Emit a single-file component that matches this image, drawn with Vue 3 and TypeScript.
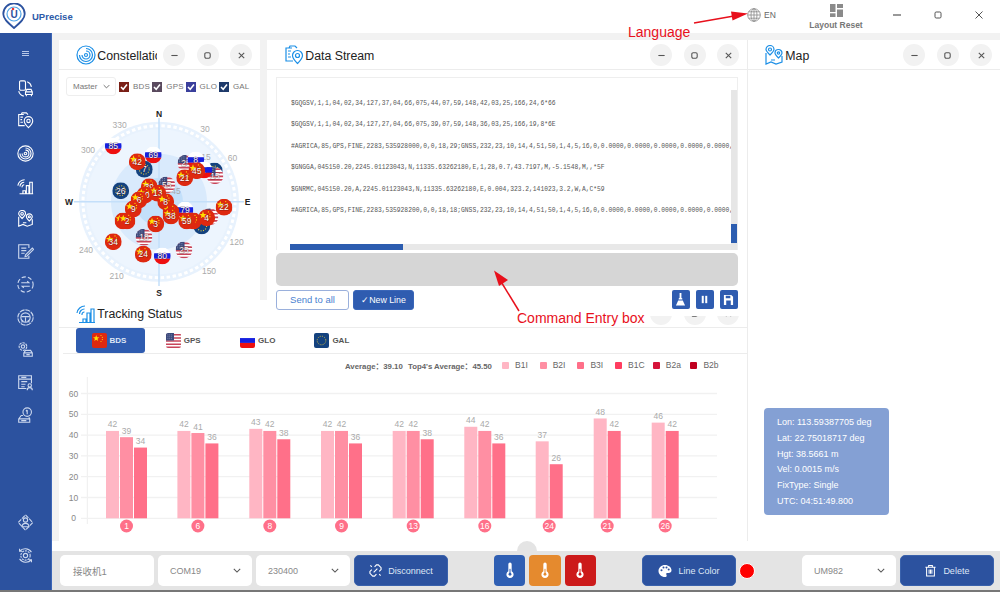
<script setup lang="ts">
type Gnss = 'bds' | 'gps' | 'glo' | 'gal'

const sideTop = ['phonecar', 'stream', 'target', 'signal', 'map', 'note', 'exchange', 'wheel', 'gear', 'doc', 'disk']
const sideBottom = ['person', 'rotate']

const streamLines = [
  '$GQGSV,1,1,04,02,34,127,37,04,66,075,44,07,59,148,42,03,25,166,24,6*66',
  '$GQGSV,1,1,04,02,34,127,27,04,66,075,39,07,59,148,36,03,25,166,19,8*6E',
  '#AGRICA,85,GPS,FINE,2283,535928000,0,0,18,29;GNSS,232,23,10,14,4,51,50,1,4,5,16,0,0.0000,0.0000,0.0000,0.0000,0.0000,0.0000,0.0000',
  '$GNGGA,045150.20,2245.01123043,N,11335.63262180,E,1,28,0.7,43.7197,M,-5.1548,M,,*5F',
  '$GNRMC,045150.20,A,2245.01123043,N,11335.63262180,E,0.004,323.2,141023,3.2,W,A,C*59',
  '#AGRICA,85,GPS,FINE,2283,535928200,0,0,18,18;GNSS,232,23,10,14,4,51,50,1,4,5,16,0,0.0000,0.0000,0.0000,0.0000,0.0000,0.0000,0.0000'
]

const checks: { id: Gnss; label: string }[] = [
  { id: 'bds', label: 'BDS' },
  { id: 'gps', label: 'GPS' },
  { id: 'glo', label: 'GLO' },
  { id: 'gal', label: 'GAL' }
]

const angles = [
  ['330', 119.7, 128], ['30', 205, 132], ['300', 88, 153], ['60', 232.5, 161],
  ['120', 236.7, 245], ['240', 86, 253], ['210', 116.7, 279], ['150', 209, 274],
  ['15', 206, 160], ['45', 176, 194]
] as const

const sats: { n: string; t: Gnss; x: number; y: number }[] = [
  { n: '85', t: 'glo', x: 113.3, y: 146 },
  { n: '69', t: 'glo', x: 153.3, y: 155 },
  { n: '7', t: 'gal', x: 144.3, y: 169.3 },
  { n: '42', t: 'bds', x: 137.3, y: 161.7 },
  { n: '25', t: 'gps', x: 186, y: 163.3 },
  { n: '8', t: 'glo', x: 195.7, y: 160 },
  { n: '', t: 'gal', x: 214.3, y: 171 },
  { n: '15', t: 'gps', x: 215, y: 175.7 },
  { n: '', t: 'glo', x: 204, y: 170 },
  { n: '45', t: 'bds', x: 196.7, y: 170.7 },
  { n: '21', t: 'bds', x: 184.7, y: 177.7 },
  { n: '26', t: 'gal', x: 120.7, y: 190.7 },
  { n: '55', t: 'gps', x: 166.7, y: 185 },
  { n: '39', t: 'bds', x: 149.3, y: 186.7 },
  { n: '10', t: 'bds', x: 145, y: 195 },
  { n: '13', t: 'bds', x: 157.7, y: 193.3 },
  { n: '6', t: 'bds', x: 139, y: 200 },
  { n: '8', t: 'bds', x: 165.7, y: 201.7 },
  { n: '9', t: 'bds', x: 133.3, y: 209 },
  { n: '', t: 'bds', x: 123, y: 221 },
  { n: '2', t: 'bds', x: 127, y: 221 },
  { n: '79', t: 'glo', x: 185, y: 210 },
  { n: '', t: 'bds', x: 171, y: 212 },
  { n: '38', t: 'bds', x: 171, y: 216 },
  { n: '', t: 'gal', x: 201.7, y: 226 },
  { n: '', t: 'gps', x: 210, y: 216.7 },
  { n: '', t: 'bds', x: 193.3, y: 221 },
  { n: '59', t: 'bds', x: 186.7, y: 221 },
  { n: '4', t: 'bds', x: 206.7, y: 217.7 },
  { n: '22', t: 'bds', x: 224, y: 207.3 },
  { n: '3', t: 'bds', x: 155.7, y: 224 },
  { n: '18', t: 'gps', x: 144, y: 237.3 },
  { n: '34', t: 'bds', x: 113.3, y: 241.7 },
  { n: '24', t: 'bds', x: 143.3, y: 254.3 },
  { n: '80', t: 'glo', x: 162.3, y: 256 },
  { n: '25', t: 'gps', x: 184, y: 250 }
]

const legend = [
  { label: 'B1I', color: '#ffb6c4' },
  { label: 'B2I', color: '#ff8fa3' },
  { label: 'B3I', color: '#ff6f89' },
  { label: 'B1C', color: '#ff3d60' },
  { label: 'B2a', color: '#d5133a' },
  { label: 'B2b', color: '#c00020' }
]

const barColors = ['#ffb6c4', '#ff8fa3', '#ff7089']
const ticks = [0, 10, 20, 30, 40, 50, 60]
const groups = [
  { id: 1, x: 106, v: [42, 39, 34] },
  { id: 6, x: 177.4, v: [42, 41, 36] },
  { id: 8, x: 249.3, v: [43, 42, 38] },
  { id: 9, x: 321, v: [42, 42, 36] },
  { id: 13, x: 392.7, v: [42, 42, 38] },
  { id: 16, x: 464.3, v: [44, 42, 36] },
  { id: 24, x: 535.7, v: [37, 26] },
  { id: 21, x: 593.7, v: [48, 42] },
  { id: 26, x: 651.7, v: [46, 42] }
]
const barY = (v: number) => 517.3 - v * 2.08

const mapInfo = [
  'Lon: 113.59387705 deg',
  'Lat: 22.75018717 deg',
  'Hgt: 38.5661 m',
  'Vel: 0.0015 m/s',
  'FixType: Single',
  'UTC: 04:51:49.800'
]
const thermos = ['#2f5fb3', '#e58a2e', '#cc1a1a']
</script>

<template>
  <div class="app">
    <svg class="defs" width="0" height="0" aria-hidden="true">
      <defs>
        <clipPath id="satClip"><circle cx="8.5" cy="8.5" r="8.5" /></clipPath>
        <symbol id="flag-bds" viewBox="0 0 16 16">
          <rect width="16" height="16" fill="#de2910" />
          <path d="M4.5 2l.9 2.4 2.5.1-2 1.6.7 2.4-2.1-1.4-2.1 1.4.7-2.4-2-1.6 2.5-.1z" fill="#ffde00" />
          <circle cx="9.6" cy="2.6" r=".6" fill="#ffde00" />
          <circle cx="11" cy="4.6" r=".6" fill="#ffde00" />
          <circle cx="11" cy="7" r=".6" fill="#ffde00" />
          <circle cx="9.6" cy="9" r=".6" fill="#ffde00" />
        </symbol>
        <symbol id="flag-gps" viewBox="0 0 16 16">
          <rect width="16" height="16" fill="#fff" />
          <path d="M0 1h16v1.6H0zM0 4.4h16V6H0zM0 7.8h16v1.6H0zM0 11.2h16v1.6H0zM0 14.4h16V16H0z" fill="#c8455a" />
          <rect width="8.5" height="8" fill="#3c4a7c" />
          <path d="M1.5 2h5M1.5 4h5M1.5 6h5" stroke="#9aa4c8" stroke-width=".7" stroke-dasharray="1 1" />
        </symbol>
        <symbol id="flag-glo" viewBox="0 0 16 16">
          <rect width="16" height="5.4" fill="#fff" />
          <rect y="5.4" width="16" height="5.2" fill="#1520e0" />
          <rect y="10.6" width="16" height="5.4" fill="#ee1010" />
        </symbol>
        <symbol id="flag-gal" viewBox="0 0 16 16">
          <rect width="16" height="16" fill="#14427f" />
          <circle cx="8" cy="8" r="4.6" fill="none" stroke="#e8c93a" stroke-width="1" stroke-dasharray="1 1.4" />
        </symbol>

        <symbol id="ic-phonecar" viewBox="0 0 20 20">
          <rect x="3" y="1" width="7" height="11" rx="1.5" />
          <path d="M12 2a8 8 0 0 1 5 6M2 13a8 8 0 0 0 6 6" />
          <path d="M10 17v-3l1.5-3h5l1.5 3v3zM10 14h8" />
          <path d="M11 17v2M17 17v2" />
        </symbol>
        <symbol id="ic-stream" viewBox="0 0 20 20">
          <path d="M8 3H2v13h7M4 6h3M4 9h2M4 12h3M5 3l1-2h5l2 2" />
          <path d="M13.5 18.5c-3-3-5-5-5-8a5 5 0 0 1 10 0c0 3-2 5-5 8z" />
          <circle cx="13.5" cy="10.5" r="2" />
        </symbol>
        <symbol id="ic-target" viewBox="0 0 20 20">
          <circle cx="10" cy="10" r="9" />
          <path d="M10 3.5a6.5 6.5 0 1 1-6.500 6.500" />
          <path d="M10 6a4 4 0 1 1-4 4" />
          <circle cx="10" cy="10" r="1.5" />
        </symbol>
        <symbol id="ic-signal" viewBox="0 0 20 20">
          <path d="M1 9a8 8 0 0 1 8-7M3.5 10a5 5 0 0 1 5-5M6 11a2.5 2.5 0 0 1 2.500-3" />
          <path d="M7 18v-3h3v3M11 18V9h3v9M15 18V5h3v13M3 18.500h16" />
        </symbol>
        <symbol id="ic-map" viewBox="0 0 20 20">
          <path d="M6 10C3.500 7.500 2 6 2 4.500a4 4 0 0 1 8 0C10 6 8.500 7.500 6 10z" />
          <circle cx="6" cy="4.500" r="1.500" />
          <path d="M14.500 13c-2-2-3.500-3.500-3.500-5a3.500 3.500 0 0 1 7 0c0 1.500-1.500 3-3.500 5z" />
          <circle cx="14.500" cy="8" r="1.200" />
          <path d="M2 8v11l5-2 5 2 6-2v-6M7 15h4" />
        </symbol>
        <symbol id="ic-note" viewBox="0 0 20 20">
          <path d="M14 6V2H2v16h12v-3M5 6h6M5 9h6M5 12h4" />
          <path d="M10 14l8-8 1.500 1.500-8 8-2 .5z" />
        </symbol>
        <symbol id="ic-exchange" viewBox="0 0 20 20">
          <circle cx="10" cy="10" r="9" stroke-dasharray="5 2.5" />
          <path d="M5 8h9l-2-2M15 12H6l2 2" />
        </symbol>
        <symbol id="ic-wheel" viewBox="0 0 20 20">
          <circle cx="10" cy="10" r="9" stroke-dasharray="6 1" />
          <circle cx="10" cy="10" r="5.5" />
          <path d="M5 9h10M10 10v5M7 13l-1.500 3M13 13l1.500 3" />
        </symbol>
        <symbol id="ic-gear" viewBox="0 0 20 20">
          <circle cx="7" cy="6.5" r="4.5" stroke-dasharray="3 1" />
          <circle cx="7" cy="6.5" r="2" />
          <path d="M8 18v-4l2-3h6l2 3v4zM8 14h10M11 16h4" />
        </symbol>
        <symbol id="ic-doc" viewBox="0 0 20 20">
          <path d="M11 17H2V2h15v9M2 6h15M5 4h6M5 9h7M5 12h5M5 15h4" />
          <circle cx="15" cy="13.5" r="2" />
          <path d="M12 19a3 3 0 0 1 6 0" />
        </symbol>
        <symbol id="ic-disk" viewBox="0 0 20 20">
          <path d="M7 10H5l-3 4v4h13v-4l-1-2M2 14h13M5 16h6" />
          <circle cx="12" cy="6" r="5" />
          <path d="M12 3.500v5M10.500 5l1.500-1.500" />
        </symbol>
        <symbol id="ic-person" viewBox="0 0 20 20">
          <path d="M10 1l8.500 9-8.500 9-8.500-9z" stroke-dasharray="5 1.2" />
          <circle cx="10" cy="7" r="2.5" />
          <path d="M6 15a4 4 0 0 1 8 0z" />
        </symbol>
        <symbol id="ic-rotate" viewBox="0 0 20 20">
          <path d="M3 5a9 9 0 0 1 14 1M17 15a9 9 0 0 1-14-1M3 2v3h3M17 18v-3h-3" />
          <circle cx="10" cy="10" r="5.5" stroke-dasharray="2.5 1" />
          <circle cx="10" cy="10" r="2.5" />
        </symbol>
      </defs>
    </svg>

    <header class="topbar">
      <svg class="logo" viewBox="0 0 24 26" width="24" height="26">
        <path d="M12 25C5 19 1.300 15.500 1.300 11a10.700 10.700 0 0 1 21.400 0C22.700 15.500 19 19 12 25z" fill="none" stroke="#2c529f" stroke-width="1.800" />
        <circle cx="12" cy="11" r="7" fill="none" stroke="#4fa3e6" stroke-width="1.200" />
        <text x="12" y="15" text-anchor="middle" class="logo-u">U</text>
        <circle cx="11" cy="6" r="1.300" fill="#e33" />
      </svg>
      <span class="brand">UPrecise</span>

      <div class="lang">
        <svg viewBox="0 0 14 14" width="14" height="14" fill="none" stroke="#888" stroke-width=".8">
          <circle cx="7" cy="7" r="6.300" />
          <ellipse cx="7" cy="7" rx="3" ry="6.300" />
          <path d="M7 .7v12.600M.7 7h12.600M1.600 3.800h10.800M1.600 10.200h10.800" />
        </svg>
        <span>EN</span>
      </div>
      <div class="layout-reset">
        <svg viewBox="0 0 13 13" width="13" height="13" fill="#8a8a8a">
          <rect width="5.5" height="8" />
          <rect x="7" width="6" height="4" />
          <rect y="9.3" width="5.5" height="3.700" />
          <rect x="7" y="5.5" width="6" height="7.500" />
        </svg>
        <span>Layout Reset</span>
      </div>
      <button class="win-btn">
        <svg viewBox="0 0 10 10" width="10" height="10"><path d="M1 5h8" stroke="#555" stroke-width="1.200" /></svg>
      </button>
      <button class="win-btn">
        <svg viewBox="0 0 10 10" width="10" height="10"><rect x="2" y="2" width="6" height="6" rx="1.200" fill="none" stroke="#555" stroke-width="1" /></svg>
      </button>
      <button class="win-btn">
        <svg viewBox="0 0 10 10" width="10" height="10"><path d="M1.500 1.500l7 7M8.500 1.500l-7 7" stroke="#555" stroke-width="1" /></svg>
      </button>
    </header>

    <div class="body">
      <nav class="side">
        <div class="menu-icon"><i /><i /><i /></div>
        <svg v-for="(name, i) in sideTop" :key="name" class="side-icon" :class="{ dim: i > 4 }" viewBox="0 0 20 20">
          <use :href="`#ic-${name}`" />
        </svg>
        <div class="side-spacer" />
        <svg v-for="name in sideBottom" :key="name" class="side-icon dim" viewBox="0 0 20 20">
          <use :href="`#ic-${name}`" />
        </svg>
      </nav>

      <div class="content">
        <div class="workspace">
          <div class="left">
            <div class="top-row">
              <section class="panel constellation">
                <div class="panel-head">
                  <svg class="panel-icon" viewBox="0 0 20 20"><use href="#ic-target" /></svg>
                  <span class="panel-title clip">Constellation</span>
                  <span class="round-btn"><svg viewBox="0 0 10 10"><path d="M1.500 5h7" /></svg></span>
                  <span class="round-btn"><svg viewBox="0 0 10 10"><rect x="2" y="2" width="6" height="6" rx="1.500" /></svg></span>
                  <span class="round-btn"><svg viewBox="0 0 10 10"><path d="M2 2l6 6M8 2l-6 6" /></svg></span>
                </div>
                <div class="filters">
                  <div class="master">
                    <span>Master</span>
                    <svg viewBox="0 0 10 6" width="7" height="5"><path d="M1 1l4 4 4-4" fill="none" stroke="#666" stroke-width="1.300" /></svg>
                  </div>
                  <label v-for="c in checks" :key="c.id" class="check">
                    <span class="check-box" :class="c.id">
                      <svg viewBox="0 0 10 10"><path d="M2 5l2.200 2.300L8 2.500" fill="none" stroke="#fff" stroke-width="1.500" /></svg>
                    </span>
                    {{ c.label }}
                  </label>
                </div>
                <svg class="polar" viewBox="59 100 201 200">
                  <circle cx="159" cy="201.700" r="80" fill="#e8f2fd" />
                  <circle cx="159" cy="201.700" r="76" fill="none" stroke="#fff" stroke-width="3" stroke-dasharray="3.500 2.500" />
                  <circle cx="159" cy="201.700" r="72.500" fill="#edf5fe" />
                  <circle cx="159" cy="201.700" r="48" fill="#d9eafc" />
                  <circle cx="159" cy="201.700" r="24" fill="#c3e0fa" />
                  <path d="M74 201.700h170M159 118v168" stroke="#c4dffa" stroke-width="1.500" />
                  <text x="159" y="117" class="compass">N</text>
                  <text x="159" y="296" class="compass">S</text>
                  <text x="69" y="205" class="compass">W</text>
                  <text x="247.500" y="205" class="compass">E</text>
                  <text v-for="a in angles" :key="a[0]" :x="a[1]" :y="a[2]" class="angle">{{ a[0] }}</text>
                  <g v-for="(s, i) in sats" :key="i" :transform="`translate(${s.x - 8.5} ${s.y - 8.5})`">
                    <use :href="`#flag-${s.t}`" width="17" height="17" clip-path="url(#satClip)" />
                    <text x="8.500" y="11.500" class="sat-num">{{ s.n }}</text>
                  </g>
                </svg>
              </section>

              <section class="panel stream">
                <div class="panel-head">
                  <svg class="panel-icon" viewBox="0 0 20 20"><use href="#ic-stream" /></svg>
                  <span class="panel-title">Data Stream</span>
                  <span class="round-btn"><svg viewBox="0 0 10 10"><path d="M1.500 5h7" /></svg></span>
                  <span class="round-btn"><svg viewBox="0 0 10 10"><rect x="2" y="2" width="6" height="6" rx="1.500" /></svg></span>
                  <span class="round-btn"><svg viewBox="0 0 10 10"><path d="M2 2l6 6M8 2l-6 6" /></svg></span>
                </div>
                <div class="stream-body">
                  <div class="log">
                    <p v-for="line in streamLines" :key="line">{{ line }}</p>
                    <div class="scroll-v"><i /></div>
                    <div class="scroll-h"><i /></div>
                  </div>
                  <div class="cmd-box" />
                  <div class="actions">
                    <button class="btn-outline">Send to all</button>
                    <button class="btn-solid">✓New Line</button>
                    <span class="actions-gap" />
                    <button class="btn-icon">
                      <svg viewBox="0 0 12 14" fill="#fff"><path d="M5 0h2v5l1 1v1H4V6l1-1zM3.500 8h5L11 13.500H1z" /></svg>
                    </button>
                    <button class="btn-icon">
                      <svg viewBox="0 0 12 14" fill="#fff"><rect x="3" y="3" width="2.200" height="8" /><rect x="6.800" y="3" width="2.200" height="8" /></svg>
                    </button>
                    <button class="btn-icon">
                      <svg viewBox="0 0 12 14" fill="#fff"><path d="M1 2h8l2 2v9H1zM3.500 8v5h5V8zM3 3v2.500h5V3z" fill-rule="evenodd" /></svg>
                    </button>
                  </div>
                </div>
              </section>
            </div>

            <section class="tracking">
              <div class="panel-head tracking-head">
                <svg class="panel-icon" viewBox="0 0 20 20"><use href="#ic-signal" /></svg>
                <span class="panel-title">Tracking Status</span>
                <span class="round-btn"><svg viewBox="0 0 10 10"><path d="M1.500 5h7" /></svg></span>
                <span class="round-btn"><svg viewBox="0 0 10 10"><rect x="2" y="2" width="6" height="6" rx="1.500" /></svg></span>
                <span class="round-btn"><svg viewBox="0 0 10 10"><path d="M2 2l6 6M8 2l-6 6" /></svg></span>
              </div>
              <div class="tabs">
                <div v-for="(t, i) in checks" :key="t.id" class="tab" :class="{ active: i === 0 }">
                  <svg class="tab-flag" viewBox="0 0 16 16"><use :href="`#flag-${t.id}`" width="16" height="16" /></svg>
                  <span>{{ t.label }}</span>
                </div>
              </div>
              <div class="summary">
                <span class="avg">Average：39.10</span>
                <span class="avg top4">Top4's Average：45.50</span>
                <span v-for="l in legend" :key="l.label" class="legend-item">
                  <i :style="{ background: l.color }" />{{ l.label }}
                </span>
              </div>
              <svg class="chart" viewBox="59 376 688 165">
                <path d="M87.300 372v151" stroke="#eee" />
                <g v-for="t in ticks" :key="t">
                  <path :d="`M81 ${barY(t)}H717`" stroke="#f1f1f1" stroke-width="1.300" />
                  <text x="73.500" :y="barY(t) + 3" class="tick">{{ t }}</text>
                </g>
                <g v-for="g in groups" :key="g.id">
                  <g v-for="(v, i) in g.v" :key="i">
                    <rect :x="g.x + i * 14" :y="barY(v)" width="13" :height="v * 2.08" :fill="barColors[i === 1 && g.v.length === 2 ? 2 : i]" />
                    <text :x="g.x + i * 14 + 6.5" :y="barY(v) - 3.5" class="bar-val">{{ v }}</text>
                  </g>
                  <circle :cx="g.x + (g.v.length * 14 - 1) / 2" cy="525" r="6.500" fill="#ff7089" />
                  <text :x="g.x + (g.v.length * 14 - 1) / 2" y="528" class="badge">{{ g.id }}</text>
                </g>
              </svg>
            </section>
          </div>

          <section class="map-panel">
            <div class="panel-head">
              <svg class="panel-icon" viewBox="0 0 20 20"><use href="#ic-map" /></svg>
              <span class="panel-title">Map</span>
              <span class="round-btn"><svg viewBox="0 0 10 10"><path d="M1.500 5h7" /></svg></span>
              <span class="round-btn"><svg viewBox="0 0 10 10"><rect x="2" y="2" width="6" height="6" rx="1.500" /></svg></span>
              <span class="round-btn"><svg viewBox="0 0 10 10"><path d="M2 2l6 6M8 2l-6 6" /></svg></span>
            </div>
            <div class="map-info">
              <div v-for="m in mapInfo" :key="m">{{ m }}</div>
            </div>
          </section>
        </div>

        <div class="split-gap"><span class="split-handle" /></div>

        <div class="bottom">
          <div class="field name">接收机1</div>
          <div class="field">
            <span>COM19</span>
            <svg viewBox="0 0 10 6" width="8" height="5"><path d="M1 1l4 4 4-4" fill="none" stroke="#555" stroke-width="1.300" /></svg>
          </div>
          <div class="field">
            <span>230400</span>
            <svg viewBox="0 0 10 6" width="8" height="5"><path d="M1 1l4 4 4-4" fill="none" stroke="#555" stroke-width="1.300" /></svg>
          </div>
          <button class="bar-btn">
            <svg viewBox="0 0 14 14" width="13" height="13" fill="none" stroke="#fff" stroke-width="1.200">
              <path d="M6 3l2-2 2 0 3 3 0 2-2 2M8 11l-2 2-2 0-3-3 0-2 2-2M5 9l4-4M1.500 1.500l1.500 1.500M11 11l1.500 1.500" />
            </svg>
            Disconnect
          </button>
          <div class="thermos">
            <button v-for="c in thermos" :key="c" class="thermo" :style="{ background: c }">
              <svg viewBox="0 0 12 20" width="10" height="17">
                <path d="M4 2.500a2 2 0 0 1 4 0V11a4.300 4.300 0 1 1-4 0z" fill="#fff" />
                <circle cx="6" cy="14.500" r="1.700" :fill="c" />
                <rect x="5.400" y="8" width="1.200" height="6" :fill="c" />
              </svg>
            </button>
          </div>
          <button class="bar-btn">
            <svg viewBox="0 0 14 14" width="14" height="14" fill="#fff">
              <path fill-rule="evenodd" d="M7 1c3.600 0 6.500 2.300 6.500 5.200 0 1.800-1.300 2.800-2.900 2.800H9.300c-.7 0-1.100.5-1.100 1 0 .3.200.6.300.9.200.3.200.6.200.9 0 .8-.7 1.200-1.700 1.200C3.400 13 .5 10.300.5 7S3.400 1 7 1zM3.500 7.300a1 1 0 1 0 0-2 1 1 0 0 0 0 2zM5.500 4.500a1 1 0 1 0 0-2 1 1 0 0 0 0 2zM8.500 4.500a1 1 0 1 0 0-2 1 1 0 0 0 0 2zM10.700 6.500a1 1 0 1 0 0-2 1 1 0 0 0 0 2z" />
            </svg>
            Line Color
          </button>
          <span class="color-dot" />
          <div class="field um">
            <span>UM982</span>
            <svg viewBox="0 0 10 6" width="8" height="5"><path d="M1 1l4 4 4-4" fill="none" stroke="#555" stroke-width="1.300" /></svg>
          </div>
          <button class="bar-btn">
            <svg viewBox="0 0 14 14" width="13" height="13" fill="none" stroke="#fff" stroke-width="1.100">
              <path d="M1.500 3.500h11M5 3.500V1.500h4v2M2.800 3.500v9.500h8.400V3.500M5.500 6v4.500M7 6v4.500M8.500 6v4.500" />
            </svg>
            Delete
          </button>
        </div>
      </div>
    </div>
    <div class="edge" />

    <!-- red notes drawn over the screenshot -->
    <svg class="notes" viewBox="0 0 1000 592">
      <path d="M694 23l40-7" stroke="#e8101c" stroke-width="1.500" />
      <path d="M748 13.500l-17-2 1.500 9z" fill="#e8101c" />
      <text x="628" y="37" class="note-text">Language</text>
      <path d="M519 311l-19-31" stroke="#e8101c" stroke-width="1.500" />
      <path d="M494 270.500l14 9.500-9 6z" fill="#e8101c" />
      <text x="517" y="323" class="note-text">Command Entry box</text>
    </svg>
  </div>
</template>

<style scoped>
.app {
  position: relative;
  width: 1000px;
  height: 592px;
  overflow: hidden;
  background: #fff;
  font-family: "Liberation Sans", Arial, "Noto Sans CJK SC", sans-serif;
}

.defs {
  position: absolute;
}

.topbar {
  display: flex;
  align-items: center;
  height: 33px;
  background: #fff;
}

.logo {
  margin: 0 0 2px 2px;
}

.logo-u {
  font: bold 10px "Liberation Sans", sans-serif;
  fill: #2c529f;
}

.brand {
  margin-left: 6px;
  font-size: 9.5px;
  font-weight: bold;
  color: #2c5aa8;
}

.lang {
  display: flex;
  align-items: center;
  gap: 3px;
  margin-left: auto;
  margin-bottom: 3px;
  width: 31px;
  font-size: 8.5px;
  color: #666;
}

.layout-reset {
  display: flex;
  flex-direction: column;
  align-items: center;
  gap: 3px;
  width: 60px;
  margin-left: 28px;
  margin-right: 10px;
  font-size: 8.5px;
  font-weight: bold;
  color: #777;
}

.win-btn {
  display: flex;
  align-items: center;
  justify-content: center;
  width: 41.33px;
  height: 30px;
  margin-bottom: 3px;
  padding: 0;
  border: 0;
  background: none;
}

.body {
  display: flex;
  height: 557px;
}

.side {
  display: flex;
  flex-direction: column;
  align-items: center;
  width: 52px;
  padding: 18px 0 26px;
  gap: 15.7px;
  box-sizing: border-box;
  background: #2c529f;
  border-right: 1px solid #3c66b8;
}

.menu-icon {
  display: flex;
  flex-direction: column;
  gap: 1px;
  width: 7px;
  margin-bottom: 8px;
}

.menu-icon i {
  height: 1px;
  background: #b8c8e8;
}

.side-icon {
  flex: none;
  width: 17px;
  height: 17px;
  fill: none;
  stroke: #fff;
  stroke-width: 1.3;
}

.side-icon.dim {
  stroke: #ccd8ee;
}

.side-spacer {
  flex: 1;
}

.content {
  flex: 1;
  display: flex;
  flex-direction: column;
  min-width: 0;
}

.workspace {
  display: flex;
  height: 508px;
  box-sizing: border-box;
  padding: 7px 0 0 7px;
  background: #f2f2f2;
}

.left {
  width: 688px;
}

.top-row {
  display: flex;
  gap: 7px;
  height: 276px;
}

.panel {
  background: #fff;
}

.constellation {
  width: 201px;
  height: 260px;
}

.stream {
  position: relative;
  z-index: 1;
  flex: 1;
  display: flex;
  flex-direction: column;
}

.panel-head {
  display: flex;
  align-items: center;
  gap: 11.3px;
  height: 30px;
  padding: 1px 8px 0 17px;
  box-sizing: border-box;
  border-bottom: 1px solid #ececec;
}

.panel-icon {
  flex: none;
  width: 20px;
  height: 20px;
  margin-right: -10px;
  fill: none;
  stroke: #1c8fe6;
  stroke-width: 1.2;
}

.panel-title {
  flex: 1;
  min-width: 0;
  padding-top: 1px;
  font-size: 12.3px;
  color: #222;
  white-space: nowrap;
}

.panel-title.clip {
  overflow: hidden;
  margin-right: -5px;
}

.round-btn {
  flex: none;
  display: flex;
  align-items: center;
  justify-content: center;
  width: 22px;
  height: 22px;
  border-radius: 50%;
  background: #f2f2f2;
}

.round-btn svg {
  width: 9px;
  height: 9px;
  fill: none;
  stroke: #555;
  stroke-width: 1.2;
}

.filters {
  display: flex;
  align-items: center;
  height: 19px;
  margin-top: 7px;
  padding-left: 7px;
}

.master {
  display: flex;
  align-items: center;
  justify-content: space-between;
  width: 50px;
  height: 19px;
  box-sizing: border-box;
  margin-right: 3px;
  padding: 0 5px 0 6px;
  border: 1px solid #eee;
  border-radius: 3px;
  font-size: 8px;
  color: #777;
}

.check {
  display: flex;
  align-items: center;
  gap: 4px;
  width: 33.3px;
  font-size: 8px;
  letter-spacing: .2px;
  color: #777;
}

.check-box {
  flex: none;
  display: flex;
  width: 10px;
  height: 10px;
}

.check-box svg {
  width: 10px;
  height: 10px;
}

.check-box.bds {
  background: #7a1f16;
}

.check-box.gps {
  background: #5a4a5e;
}

.check-box.glo {
  background: #3a3f9c;
}

.check-box.gal {
  background: #1e3a6a;
}

.polar {
  display: block;
  width: 201px;
  height: 200px;
  margin-top: 4px;
}

.compass {
  font-size: 8.5px;
  font-weight: bold;
  fill: #222;
  text-anchor: middle;
}

.angle {
  font-size: 8.5px;
  fill: #aaa;
  text-anchor: middle;
}

.sat-num {
  font-size: 8.5px;
  fill: #fff;
  stroke: rgba(70, 10, 10, .45);
  stroke-width: 1px;
  paint-order: stroke;
  text-anchor: middle;
}

.stream-body {
  flex: 1;
  display: flex;
  flex-direction: column;
  padding: 7px 9px 6px;
}

.log {
  position: relative;
  height: 173px;
  box-sizing: border-box;
  padding: 21px 0 0 14px;
  overflow: hidden;
  border: 1px solid #eee;
  border-bottom: 0;
}

.log p {
  width: 440px;
  height: 21.4px;
  margin: 0;
  overflow: hidden;
  white-space: nowrap;
  font: 6.3px/9px "Liberation Mono", monospace;
  color: #555;
}

.scroll-v {
  position: absolute;
  top: 12px;
  right: 0;
  bottom: 0;
  width: 6px;
  background: #e6e6e6;
}

.scroll-v i {
  position: absolute;
  right: 0;
  bottom: 7px;
  width: 6px;
  height: 19px;
  background: #2c5db0;
}

.scroll-h {
  position: absolute;
  left: 13px;
  right: 6px;
  bottom: 0;
  height: 6px;
  background: #e8e8e8;
}

.scroll-h i {
  position: absolute;
  left: 0;
  top: 0;
  width: 113px;
  height: 6px;
  background: #2c5db0;
}

.cmd-box {
  height: 32.5px;
  margin-top: 3px;
  background: #d6d6d6;
  border-radius: 5px;
}

.actions {
  display: flex;
  align-items: center;
  gap: 4px;
  height: 20px;
  margin-top: 4px;
}

.actions-gap {
  flex: 1;
}

.btn-outline,
.btn-solid {
  height: 20px;
  padding: 0;
  border-radius: 3px;
  font: 9px "Liberation Sans", sans-serif;
}

.btn-outline {
  width: 73px;
  border: 1px solid #9ab0dc;
  background: #fff;
  color: #4a7fd0;
  font-size: 9.5px;
}

.btn-solid {
  width: 61px;
  border: 1px solid #3a66b8;
  background: #2f5cb0;
  color: #fff;
  font-size: 8.8px;
}

.btn-icon {
  display: flex;
  align-items: center;
  justify-content: center;
  width: 18.5px;
  height: 19px;
  margin-left: 1.5px;
  padding: 0;
  border: 0;
  border-radius: 2px;
  background: #2f5cb0;
}

.btn-icon svg {
  width: 11px;
  height: 13px;
}

.tracking {
  height: 241px;
  margin-top: -16px;
  background: #fff;
}

.tracking-head {
  height: 27.5px;
}

.tabs {
  display: flex;
  height: 26px;
  box-sizing: border-box;
  margin-left: 4px;
  padding-left: 12.5px;
  border-bottom: 1px solid #ececec;
}

.tab {
  display: flex;
  align-items: center;
  gap: 3px;
  width: 74.3px;
  height: 25px;
  box-sizing: border-box;
  padding-left: 16px;
  font-size: 8px;
  font-weight: bold;
  color: #555;
}

.tab.active {
  width: 69px;
  margin-right: 5.3px;
  border-radius: 3px;
  background: #2f5cb0;
  color: #dfe7f6;
}

.tab-flag {
  width: 15px;
  height: 15px;
  border-radius: 2px;
}

.summary {
  display: flex;
  align-items: center;
  height: 23px;
  padding-left: 286px;
  font-size: 7.8px;
  font-weight: bold;
  color: #666;
}

.avg {
  width: 63px;
  white-space: nowrap;
}

.avg.top4 {
  width: 94px;
}

.legend-item {
  display: flex;
  align-items: center;
  gap: 6px;
  width: 37.7px;
  font-weight: normal;
  font-size: 8.5px;
}

.legend-item i {
  width: 7px;
  height: 7px;
  border-radius: 1px;
}

.chart {
  display: block;
  width: 688px;
  height: 165px;
}

.tick {
  font-size: 8.5px;
  fill: #888;
  text-anchor: middle;
}

.bar-val {
  font-size: 8.5px;
  fill: #aaa;
  text-anchor: middle;
}

.badge {
  font-size: 8.5px;
  fill: #fff;
  text-anchor: middle;
}

.map-panel {
  position: relative;
  flex: 1;
  background: #fff;
  border-left: 1px solid #ececec;
}

.map-panel .panel-head {
  padding-left: 16px;
}

.map-info {
  position: absolute;
  left: 16px;
  top: 368px;
  width: 125px;
  height: 107px;
  box-sizing: border-box;
  padding: 7px 0 0 13px;
  border-radius: 4px;
  background: #84a0d4;
  color: #fff;
  font-size: 9px;
  line-height: 15.8px;
  white-space: nowrap;
}

.split-gap {
  position: relative;
  height: 10px;
  background: #fff;
}

.split-handle {
  position: absolute;
  left: 465px;
  top: 0;
  width: 20px;
  height: 20px;
  border-radius: 50%;
  background: #e4e4e4;
}

.bottom {
  position: relative;
  display: flex;
  align-items: center;
  height: 39px;
  padding-left: 8px;
  gap: 4px;
  background: #e4e4e4;
}

.field {
  display: flex;
  align-items: center;
  justify-content: space-between;
  width: 94px;
  height: 31px;
  box-sizing: border-box;
  padding: 0 11px 0 12px;
  border-radius: 5px;
  background: #fff;
  font-size: 9px;
  color: #888;
}

.field.name {
  padding-left: 13px;
  font-size: 9.5px;
}

.field.um {
  margin-left: 43px;
}

.bar-btn {
  display: flex;
  align-items: center;
  justify-content: center;
  gap: 6px;
  width: 94px;
  height: 31px;
  padding: 0;
  border: 1px solid #3a62ac;
  border-radius: 5px;
  background: #2c529f;
  color: #dfe7f6;
  font: 9px "Liberation Sans", sans-serif;
}

.thermos {
  display: flex;
  gap: 4px;
  margin: 0 42px;
}

.thermo {
  display: flex;
  align-items: center;
  justify-content: center;
  width: 31.3px;
  height: 31px;
  padding: 0;
  border: 0;
  border-radius: 4px;
}

.color-dot {
  flex: none;
  box-sizing: border-box;
  width: 16px;
  height: 16px;
  margin-left: -1px;
  border: 1px solid #fff;
  border-radius: 50%;
  background: #f00;
}

.edge {
  height: 2px;
  background: #777;
}

.notes {
  position: absolute;
  inset: 0;
  width: 1000px;
  height: 592px;
  pointer-events: none;
  z-index: 5;
}

.note-text {
  font-size: 14px;
  fill: #e8101c;
}
</style>
